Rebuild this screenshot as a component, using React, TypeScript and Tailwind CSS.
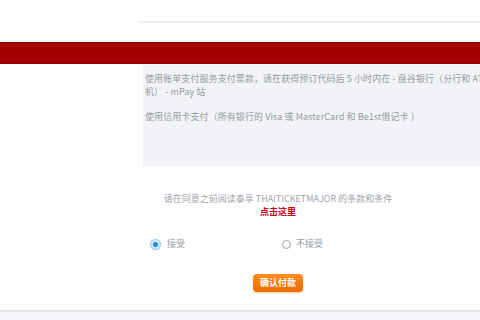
import React, { useState } from "react";

const FONT = '"Noto Sans CJK SC", "Noto Sans", "Liberation Sans", sans-serif';

export default function App() {
  const [accept, setAccept] = useState(true);

  return (
    <div
      className="w-[480px] h-[320px] overflow-hidden bg-white flex flex-col"
      style={{ fontFamily: FONT }}
    >
      {/* top divider */}
      <div className="mt-[21px] ml-[138px] h-[2px] bg-[#eceef2]" />

      {/* red header bar */}
      <div className="mt-[19px] h-[22px] bg-[#a50000] border-t border-b border-[#8e0000]" />

      {/* payment info box */}
      <div className="mt-[1px] ml-[143px] w-[357px] h-[101px] shrink-0 bg-[#f1f3f6] pl-[2px] pt-[8px] text-[9px] leading-[12.5px] tracking-[0.08px] text-[#969aa3]">
        <p>
          使用账单支付服务支付票款，请在获得预订代码后 5 小时内在 - 盘谷银行（分行和 ATM 机） - mPay 站
        </p>
        <p className="mt-[13px]">
          使用信用卡支付（所有银行的 Visa 或 MasterCard 和 Be1st借记卡 ）
        </p>
      </div>

      {/* terms */}
      <div className="ml-[143px] w-[270px] text-center text-[9px] leading-[12px]">
        <p className="mt-[27px] text-[#a0a4ab]">
          请在同意之前阅读泰享 THAITICKETMAJOR 的条款和条件
        </p>
        <p className="mt-[1px] font-bold text-[#c4001a]">点击这里</p>
      </div>

      {/* radios */}
      <div className="mt-[20px] ml-[151px] flex items-center text-[9px] leading-[12px] text-[#969aa3]">
        <label className="w-[131px] flex items-center gap-[7px] cursor-pointer" onClick={() => setAccept(true)}>
          <span
            className={
              accept
                ? "w-[9px] h-[9px] rounded-full border-[2px] border-[#d6e9fb] bg-[#1e88e5] ring-1 ring-[#9cc8f2]"
                : "w-[9px] h-[9px] rounded-full border border-[#9a9ea6] bg-white"
            }
          />
          接受
        </label>
        <label className="flex items-center gap-[5px] cursor-pointer" onClick={() => setAccept(false)}>
          <span
            className={
              !accept
                ? "w-[9px] h-[9px] rounded-full border-[2px] border-[#d6e9fb] bg-[#1e88e5] ring-1 ring-[#9cc8f2]"
                : "w-[9px] h-[9px] rounded-full border border-[#9a9ea6] bg-white"
            }
          />
          不接受
        </label>
      </div>

      {/* confirm button */}
      <div className="mt-[17px] ml-[253px]">
        <button className="w-[50px] h-[18px] rounded-[4px] bg-gradient-to-b from-[#ff8d1f] to-[#ef6a00] text-white text-[9px] font-bold leading-[18px] shadow-[0_1px_2px_rgba(239,106,0,0.35)]">
          确认付款
        </button>
      </div>

      {/* footer strip */}
      <div className="mt-auto h-[10px] bg-[#f4f5f8] border-t-[2px] border-[#e4e6eb]" />
    </div>
  );
}
